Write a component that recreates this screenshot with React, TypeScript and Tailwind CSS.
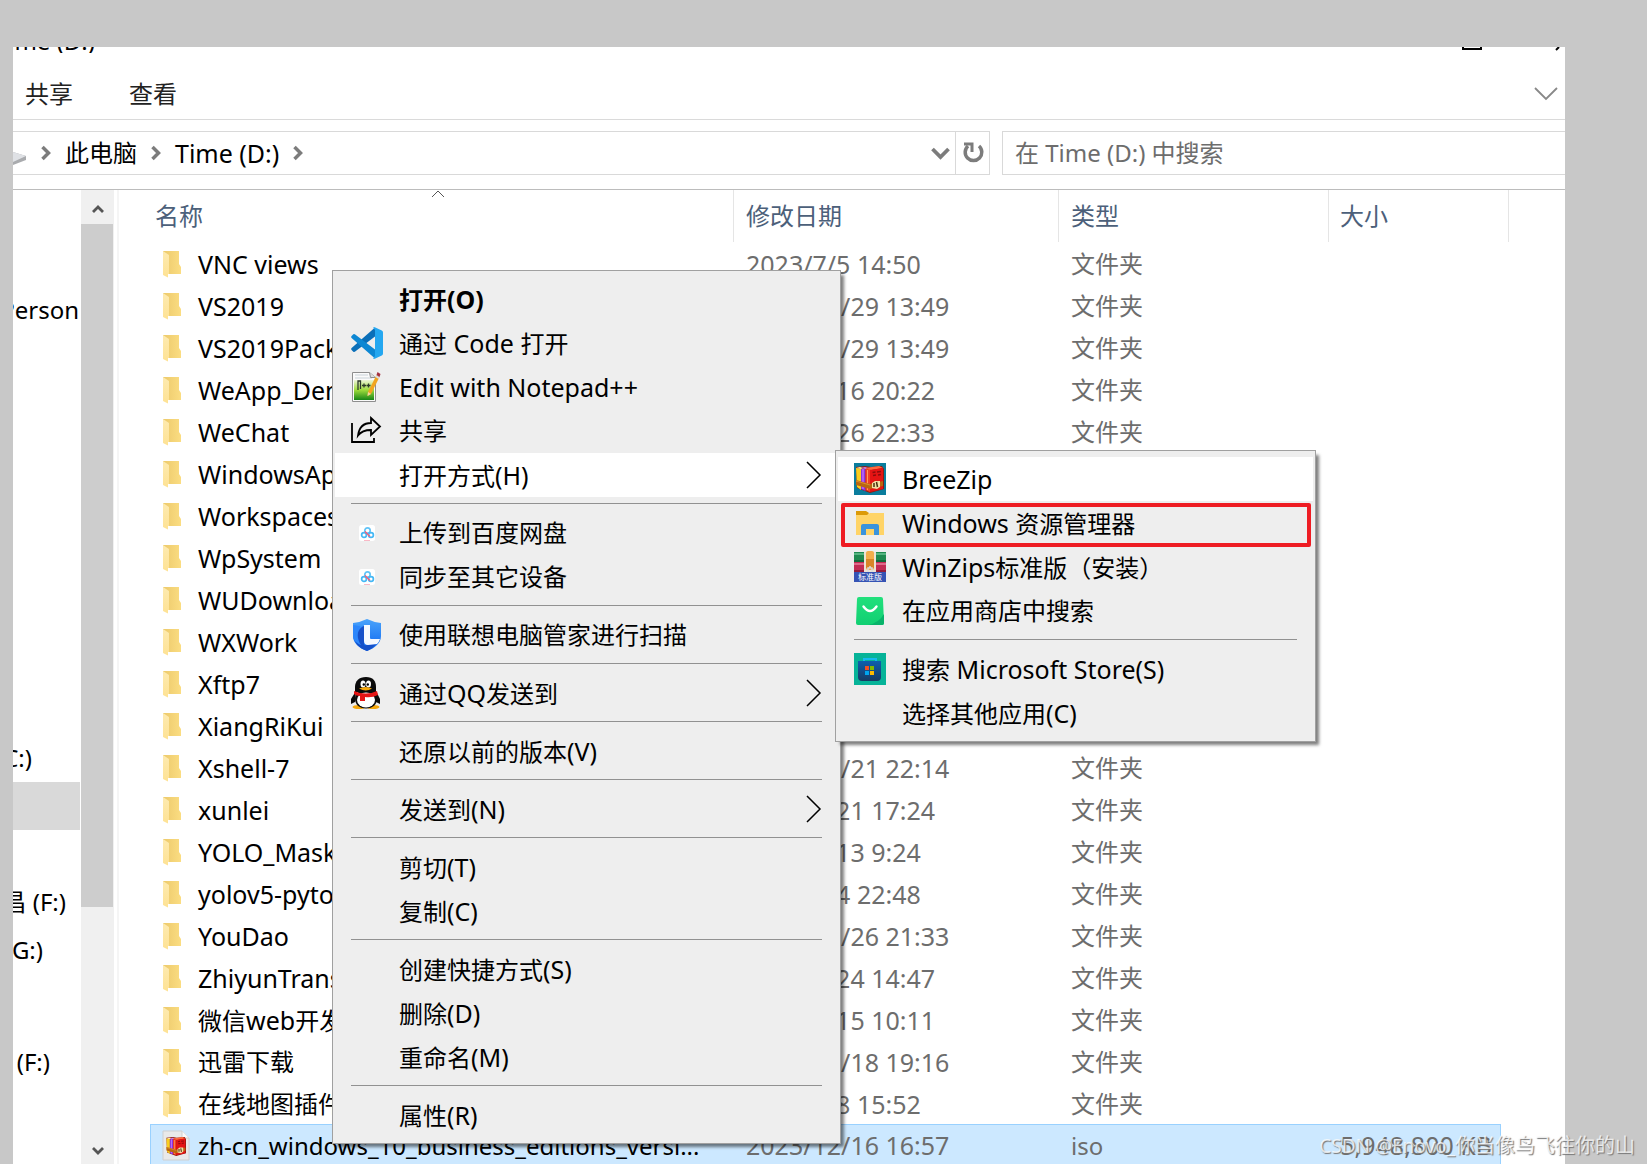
import React from "react";

type FileRow = { name: string; date: string };

const folders: FileRow[] = [
  { name: "VNC views", date: "2023/7/5 14:50" },
  { name: "VS2019", date: "2023/11/29 13:49" },
  { name: "VS2019Package", date: "2023/11/29 13:49" },
  { name: "WeApp_Demo", date: "2023/8/16 20:22" },
  { name: "WeChat", date: "2023/9/26 22:33" },
  { name: "WindowsApps", date: "2023/9/16 10:20" },
  { name: "Workspaces", date: "2023/8/12 15:30" },
  { name: "WpSystem", date: "2023/9/16 10:20" },
  { name: "WUDownloadCache", date: "2023/9/16 10:20" },
  { name: "WXWork", date: "2023/7/10 9:12" },
  { name: "Xftp7", date: "2023/10/21 22:14" },
  { name: "XiangRiKui", date: "2023/7/18 16:40" },
  { name: "Xshell-7", date: "2023/10/21 22:14" },
  { name: "xunlei", date: "2023/7/21 17:24" },
  { name: "YOLO_Mask", date: "2023/8/13 9:24" },
  { name: "yolov5-pytorch", date: "2023/8/4 22:48" },
  { name: "YouDao", date: "2023/10/26 21:33" },
  { name: "ZhiyunTranslator", date: "2023/7/24 14:47" },
  { name: "微信web开发者工具", date: "2023/8/15 10:11" },
  { name: "迅雷下载", date: "2023/11/18 19:16" },
  { name: "在线地图插件", date: "2023/8/8 15:52" },
];

/** Sets Latin runs one pixel larger than the Chinese characters around them. */
function Mixed({ text }: { text: string }) {
  return (
    <span className="whitespace-pre">
      {text.split(/([ -~]+)/).map((run, i) =>
        i % 2 ? (
          <span key={i} className="text-[25px]">
            {run}
          </span>
        ) : (
          run
        ),
      )}
    </span>
  );
}

function FolderIcon() {
  return (
    <svg width="20" height="28" viewBox="0 0 20 28" className="shrink-0" aria-hidden="true">
      <defs>
        <linearGradient id="folderBack" x1="0" x2="1">
          <stop offset="0" stopColor="#ecc96b" />
          <stop offset="1" stopColor="#fbdd82" />
        </linearGradient>
        <linearGradient id="folderFront" x1="0" x2="0" y1="0" y2="1">
          <stop offset="0" stopColor="#fdeab0" />
          <stop offset="1" stopColor="#fee294" />
        </linearGradient>
      </defs>
      <path d="M1 1h16v13l2 3v7H1z" fill="url(#folderBack)" />
      <path d="M1 1l6 4v19h-1v3.500L1 25z" fill="url(#folderFront)" />
    </svg>
  );
}

function Books() {
  return (
    <>
      <path d="M2 4l9-1 6 1 11-1 2 3v20l-14 4L3 25z" fill="#8e1a12" />
      <path d="M2 5l5 1v21l-4-3z" fill="#f9cf1e" />
      <path d="M2 5l4-1 3 1-2 1z" fill="#fff0a0" />
      <path d="M7 6h4.500v22L7 26z" fill="#8a35e0" />
      <path d="M8.500 6h1v20h-1z" fill="#d48bff" />
      <path d="M7 5l4-1 3 1-2.500 1z" fill="#c986f2" />
      <path d="M11.500 6H16v23l-4.500-2z" fill="#ef3f24" />
      <path d="M13 7h1v20h-1z" fill="#ff9a5a" />
      <path d="M11 5l14-2 4 2-12 2z" fill="#ff6a3e" />
      <path d="M16 7l13-2v21l-13 3z" fill="#e51414" />
      <path d="M18.500 9.500l3-.5M23 9l4-.5M19 12.500l3-.5M24 12l3-.5" stroke="#8e0c0c" strokeWidth="1.500" />
      <path d="M2 17l14 4 13-3v5l-13 3-14-4z" fill="#b9660f" />
      <path d="M2 18l14 4" stroke="#dd8e2c" />
      <path d="M18 20l3-2h5v6l-3 2-5-1z" fill="#f3dfa6" />
      <path d="M20 24v-4M22.500 19l1 5" stroke="#4a300f" strokeWidth="1.500" fill="none" />
    </>
  );
}

function BreeZipIcon() {
  return (
    <svg width="32" height="32" viewBox="0 0 32 32" aria-hidden="true">
      <rect width="32" height="32" fill="#0a7d9d" />
      <Books />
    </svg>
  );
}

function IsoIcon() {
  return (
    <svg width="28" height="32" viewBox="0 0 28 32" className="shrink-0" aria-hidden="true">
      <path d="M1 1h19l7 7v22H1z" fill="#e9e9e9" stroke="#cfcfcf" />
      <path d="M20 1v7h7" fill="#fafafa" stroke="#cfcfcf" />
      <g transform="translate(3 5) scale(0.7)">
        <Books />
      </g>
    </svg>
  );
}

function CodeIcon() {
  return (
    <svg width="32" height="32" viewBox="0 0 32 32" aria-hidden="true">
      <path d="M24 .5L.6 21.100q-.9 1 0 2L2.300 24.700q1 .6 1.900-.1L24 9.500z" fill="#0a6fb8" />
      <path d="M.6 10.900q-.9-1 0-2L2.300 7.300q1-.6 1.900.1L24 22.500v9z" fill="#0d87d3" />
      <path d="M23.800 31.700q-.9.400-1.800-.2L24 29V3l-2-2.500q.9-.6 1.800-.2l7 3.200q1.200.6 1.200 1.900v21.200q0 1.300-1.200 1.900z" fill="#24a7f0" />
    </svg>
  );
}

function NotepadIcon() {
  return (
    <svg width="32" height="32" viewBox="0 0 32 32" aria-hidden="true">
      <defs>
        <linearGradient id="noteGreen" x1="0" x2="0" y1="0" y2="1">
          <stop offset="0" stopColor="#eef5d8" />
          <stop offset="0.500" stopColor="#9fdc3c" />
          <stop offset="1" stopColor="#178516" />
        </linearGradient>
      </defs>
      <path d="M1.500 1.500h17l6 5v24h-23z" fill="#fafafa" stroke="#8e8e8e" />
      <path d="M4 4h13M4 7h17" stroke="#c9d2d8" />
      <rect x="3" y="9" width="20" height="20" fill="url(#noteGreen)" />
      <path d="M18.500 1.500l1 5h5" fill="#dcdcdc" stroke="#8e8e8e" />
      <path d="M7 19v-9h2.500v8M11 14.500h4M13 12.500v4M15.500 14.500h4M17.500 12.500v4" stroke="#2d3a2a" strokeWidth="1.300" fill="none" />
      <path d="M25.500 4l3 2-8.500 17-3.500 2 .5-4z" fill="#f2a51f" />
      <path d="M25.500 4l3 2-1 2-3-2z" fill="#d8dce0" />
      <path d="M26.500 1l3 2-1 3-3-2z" fill="#a4303f" />
      <path d="M17 21l3 2-3.500 2z" fill="#efd8a0" />
    </svg>
  );
}

function ShareIcon() {
  return (
    <svg width="32" height="32" viewBox="0 0 32 32" fill="none" stroke="#000" strokeWidth="1.800" aria-hidden="true">
      <path d="M1 8v19h22v-4" />
      <path d="M20 3l9 8.500-9 8.500v-5c-6 0-10 1.500-13 5.500C8 13 12 8 20 8z" />
    </svg>
  );
}

function CloudIcon() {
  return (
    <svg width="16" height="16" viewBox="0 0 16 16" fill="none" aria-hidden="true">
      <rect width="16" height="16" rx="2.500" fill="#fff" />
      <circle cx="8.500" cy="5.500" r="2.700" stroke="#63c4f7" strokeWidth="1.700" />
      <circle cx="5" cy="10" r="2.400" stroke="#45b8f5" strokeWidth="1.700" />
      <circle cx="12" cy="10" r="2.400" stroke="#45b8f5" strokeWidth="1.700" />
      <path d="M6 6.500l5 5" stroke="#f2607d" strokeWidth="1.500" />
      <path d="M5 15.500h6" stroke="#f9b9c6" />
    </svg>
  );
}

function ShieldIcon() {
  return (
    <svg width="32" height="32" viewBox="0 0 32 32" aria-hidden="true">
      <defs>
        <linearGradient id="shieldBlue" x1="0" x2="0" y1="0" y2="1">
          <stop offset="0" stopColor="#4aa3fb" />
          <stop offset="1" stopColor="#0b66f0" />
        </linearGradient>
      </defs>
      <path d="M16 0q6 3 14 4v13c0 7-6 12-14 15C8 29 2 24 2 17V4q8-1 14-4z" fill="url(#shieldBlue)" />
      <path d="M13 7v19q1 .5 3 0l9-1c-2 3-5 5-9 7C8 29 4 25 3 18q0-8 10-11z" fill="#1550c9" />
      <path d="M2 17V6q7 1 9 2c-6 4-5 12-1 18-5-2-8-5-8-9z" fill="#2c86fb" />
      <path d="M13 6h6v13q0 1 1 1h9q-1 3-3 5l-9 1q-4 0-4-4z" fill="#f4f8ff" />
    </svg>
  );
}

function QqIcon() {
  return (
    <svg width="32" height="32" viewBox="0 0 32 32" aria-hidden="true">
      <ellipse cx="8" cy="30" rx="6.500" ry="2" fill="#f5a70b" />
      <ellipse cx="22" cy="30" rx="6.500" ry="2" fill="#f5a70b" />
      <path d="M5 14L0 22v5l4-2zM25 14l4 8v5l-4-2z" fill="#0a0a0a" />
      <path d="M15 13c8 0 11 4 11 9s-4 9.500-11 9.500S4 27 4 22s3-9 11-9z" fill="#0a0a0a" />
      <ellipse cx="15" cy="23" rx="9" ry="7.500" fill="#fff" />
      <path d="M15 0c7 0 10 4 10 10v5H4v-5C4 4 8 0 15 0z" fill="#0a0a0a" />
      <ellipse cx="12" cy="7" rx="2.500" ry="3.500" fill="#fff" />
      <ellipse cx="17.500" cy="7" rx="2.500" ry="3.500" fill="#fff" />
      <circle cx="12.800" cy="7.500" r="1.200" fill="#000" />
      <circle cx="16.800" cy="7.500" r="1.200" fill="#000" />
      <path d="M8 11.500q7-3 13 0-6 4-13 0z" fill="#f5a70b" />
      <path d="M3 14q12 5 23 0l1 4q-6 3-13 2v4H9v-5q-4 0-6-2z" fill="#e51515" />
    </svg>
  );
}

function ExplorerIcon() {
  return (
    <svg width="32" height="32" viewBox="0 0 32 32" aria-hidden="true">
      <path d="M2 4h10l3 2-2 3H2z" fill="#dc9a08" />
      <path d="M2 8h11l3-2h14v22H2z" fill="#ffd467" />
      <path d="M7 28v-9q0-2 2-2h14q2 0 2 2v9h-5v-6h-8v6z" fill="#3a94dd" />
    </svg>
  );
}

function WinZipsIcon() {
  return (
    <svg width="32" height="32" viewBox="0 0 32 32" aria-hidden="true">
      <rect y="1" width="32" height="10" fill="#1f8a50" />
      <rect y="2" width="32" height="2" fill="#55b480" />
      <rect y="9" width="32" height="2" fill="#12683a" />
      <rect y="11" width="32" height="10" fill="#c22c54" />
      <rect y="12" width="32" height="2" fill="#e0698a" />
      <rect y="19" width="32" height="2" fill="#931c3c" />
      <rect x="10" y="1" width="12" height="20" fill="#eee3d5" />
      <rect x="12" y="0" width="8" height="19" rx="2" fill="#f3ae4d" />
      <path d="M12 8h8v9q-4 2-8 0z" fill="#d98627" />
      <path d="M14 21v-4h4v4M16 17v-2" fill="none" stroke="#ddd" strokeWidth="1.500" />
      <rect y="21" width="32" height="10" fill="#3553b4" />
      <text x="16" y="29" textAnchor="middle" fontSize="8" fill="#fff" fontFamily="Noto Sans CJK SC, sans-serif">
        标准版
      </text>
    </svg>
  );
}

function AppStoreIcon() {
  return (
    <svg width="32" height="32" viewBox="0 0 32 32" aria-hidden="true">
      <defs>
        <linearGradient id="bagGreen" x1="0" x2="0" y1="0" y2="1">
          <stop offset="0" stopColor="#22e07c" />
          <stop offset="1" stopColor="#10cf72" />
        </linearGradient>
      </defs>
      <path d="M5 2h22q2 0 2 2l1 24q0 2-2 2H4q-2 0-2-2L3 4q0-2 2-2z" fill="url(#bagGreen)" />
      <path d="M30 19v9q0 2-2 2H14q11-2 16-11z" fill="#08b36a" />
      <path d="M9.500 11.500q6.500 9 13 0" stroke="#fff" strokeWidth="2.400" fill="none" strokeLinecap="round" />
    </svg>
  );
}

function MsStoreIcon() {
  return (
    <svg width="32" height="32" viewBox="0 0 32 32" aria-hidden="true">
      <defs>
        <linearGradient id="storeBlue" x1="0" x2="0" y1="0" y2="1">
          <stop offset="0" stopColor="#0d5fae" />
          <stop offset="1" stopColor="#173a63" />
        </linearGradient>
      </defs>
      <rect width="32" height="32" fill="#06b398" />
      <path d="M10 9V6h12v3" stroke="#15b9ee" strokeWidth="2" fill="none" />
      <path d="M4 8h23v16q0 4-4 4H8q-4 0-4-4z" fill="url(#storeBlue)" />
      <rect x="11" y="13" width="4" height="4" fill="#f25022" />
      <rect x="16" y="13" width="4" height="4" fill="#7fba00" />
      <rect x="11" y="18" width="4" height="4" fill="#00a4ef" />
      <rect x="16" y="18" width="4" height="4" fill="#ffb900" />
    </svg>
  );
}

type Entry = "separator" | { label: string; icon?: React.ReactNode; bold?: boolean; active?: boolean; arrow?: boolean; marked?: boolean };

const mainEntries: Entry[] = [
  { label: "打开(O)", bold: true },
  { label: "通过 Code 打开", icon: <CodeIcon /> },
  { label: "Edit with Notepad++", icon: <NotepadIcon /> },
  { label: "共享", icon: <ShareIcon /> },
  { label: "打开方式(H)", active: true, arrow: true },
  "separator",
  { label: "上传到百度网盘", icon: <CloudIcon /> },
  { label: "同步至其它设备", icon: <CloudIcon /> },
  "separator",
  { label: "使用联想电脑管家进行扫描", icon: <ShieldIcon /> },
  "separator",
  { label: "通过QQ发送到", icon: <QqIcon />, arrow: true },
  "separator",
  { label: "还原以前的版本(V)" },
  "separator",
  { label: "发送到(N)", arrow: true },
  "separator",
  { label: "剪切(T)" },
  { label: "复制(C)" },
  "separator",
  { label: "创建快捷方式(S)" },
  { label: "删除(D)" },
  { label: "重命名(M)" },
  "separator",
  { label: "属性(R)" },
];

const openWithEntries: Entry[] = [
  { label: "BreeZip", icon: <BreeZipIcon />, active: true },
  { label: "Windows 资源管理器", icon: <ExplorerIcon />, marked: true },
  { label: "WinZips标准版（安装）", icon: <WinZipsIcon /> },
  { label: "在应用商店中搜索", icon: <AppStoreIcon /> },
  "separator",
  { label: "搜索 Microsoft Store(S)", icon: <MsStoreIcon /> },
  { label: "选择其他应用(C)" },
];

function Menu({ entries, label, className }: { entries: Entry[]; label: string; className: string }) {
  return (
    <div
      role="menu"
      aria-label={label}
      className={`absolute border border-[#a0a0a0] bg-[#eeeeee] px-[2px] py-1.5 shadow-[4px_4px_3px_-1px_rgba(0,0,0,0.5)] ${className}`}
    >
      {entries.map((e, i) =>
        e === "separator" ? (
          <div key={i} role="separator" className="mx-4 mt-1.5 mb-[7px] h-px bg-[#919191]" />
        ) : (
          <button
            key={i}
            role="menuitem"
            className={`relative flex h-11 w-full items-center gap-4 pr-4 pl-4 text-left whitespace-nowrap ${e.active ? "bg-white" : ""} ${e.bold ? "font-bold" : ""}`}
          >
            <span className="flex w-8 shrink-0 items-center justify-center">{e.icon}</span>
            <span className="flex-1">
              <Mixed text={e.label} />
            </span>
            {e.arrow && (
              <svg width="16" height="28" viewBox="0 0 16 28" fill="none" stroke="#000" strokeWidth="1.500" aria-hidden="true">
                <path d="M1 1l13 13L1 27" />
              </svg>
            )}
            {e.marked && <span className="absolute top-0.5 right-0.5 left-[3px] h-11 rounded-[2px] border-4 border-[#ee1c23]" />}
          </button>
        ),
      )}
    </div>
  );
}

function Crumb() {
  return (
    <svg width="10" height="16" viewBox="0 0 10 16" fill="none" stroke="#7c7c7c" strokeWidth="3.500" aria-hidden="true">
      <path d="M1.500 2l6 6-6 6" />
    </svg>
  );
}

function AddressBar() {
  return (
    <div className="flex h-11 gap-3">
      <div className="flex w-[977px] border-y border-r border-[#d9d9d9]">
        <svg width="13" height="42" viewBox="0 0 13 42" aria-hidden="true">
          <path d="M0 20l13 4v4L0 33z" fill="#a9abae" />
          <path d="M0 20l13 4-13 6z" fill="#dfe1e5" />
        </svg>
        <nav aria-label="地址" className="flex flex-1 items-center gap-3.5 pl-[15px]">
          <Crumb />
          <button>此电脑</button>
          <Crumb />
          <button>
            <Mixed text="Time (D:)" />
          </button>
          <Crumb />
        </nav>
        <button aria-label="历史记录" className="flex w-[30px] items-center justify-center">
          <svg width="19" height="13" viewBox="0 0 19 13" fill="none" stroke="#7c7c7c" strokeWidth="3.800" aria-hidden="true">
            <path d="M1.500 2l8 8 8-8" />
          </svg>
        </button>
        <button aria-label="刷新" className="flex w-[34px] items-center justify-center border-l border-[#d9d9d9]">
          <svg width="22" height="24" viewBox="0 0 22 24" fill="none" stroke="#7c7c7c" strokeWidth="3.500" aria-hidden="true">
            <path d="M17 5a8.300 8.300 0 1 1-11 0" />
            <path d="M2 3h8v8" strokeWidth="3" />
          </svg>
        </button>
      </div>
      <input
        aria-label="在 Time (D:) 中搜索"
        placeholder="在 Time (D:) 中搜索"
        className="min-w-0 flex-1 border-y border-l border-[#d9d9d9] pl-3 outline-none placeholder:text-[#6d6d6d]"
      />
    </div>
  );
}

function Sidebar() {
  return (
    <div className="flex shrink-0">
      <aside className="w-[68px] overflow-hidden whitespace-nowrap">
        <div className="mt-24 flex h-12 w-[66px] items-center justify-end">Person</div>
        <div className="mt-[400px] flex h-12 w-[19px] items-center justify-end">(C:)</div>
        <div className="h-12 w-[67px] bg-[#d9d9d9]" />
        <div className="mt-12 flex h-12 w-[53px] items-center justify-end">昌 (F:)</div>
        <div className="flex h-12 w-[30px] items-center justify-end">(G:)</div>
        <div className="mt-16 flex h-12 w-[37px] items-center justify-end">(F:)</div>
      </aside>
      <div className="flex w-[33px] flex-col bg-[#f0f0f0]">
        <button aria-label="向上滚动" className="flex h-[34px] items-center justify-center pt-1">
          <svg width="12" height="10" viewBox="0 0 12 10" fill="none" stroke="#555" strokeWidth="2.800" aria-hidden="true">
            <path d="M1 8l5-5 5 5" />
          </svg>
        </button>
        <div className="w-8 flex-[683] bg-[#cdcdcd]" />
        <div className="flex-[230]" />
        <button aria-label="向下滚动" className="flex h-[27px] items-center justify-center">
          <svg width="12" height="10" viewBox="0 0 12 10" fill="none" stroke="#555" strokeWidth="2.800" aria-hidden="true">
            <path d="M1 2l5 5 5-5" />
          </svg>
        </button>
      </div>
      <div className="ml-[3px] w-0.5 bg-[#f5f5f5]" />
    </div>
  );
}

function FileTable() {
  const head = "border-r border-[#e5e5e5] p-0 pl-3 text-left font-normal";
  const cell = "p-0 pt-0.5 pl-3 text-[#6d6d6d]";
  const picked = "border-t border-[#99d1ff] bg-[#cce8ff]";
  return (
    <table className="w-[1359px] shrink-0 table-fixed border-separate border-spacing-0 self-start whitespace-nowrap">
      <colgroup>
        <col className="w-[584px]" />
        <col className="w-[325px]" />
        <col className="w-[270px]" />
        <col className="w-[172px]" />
        <col className="w-2" />
      </colgroup>
      <thead>
        <tr className="h-13 text-[#4c607a]">
          <th className="relative border-r border-[#e5e5e5] p-0 pl-[5px] text-left font-normal">
            名称
            <svg width="14" height="8" viewBox="0 0 14 8" fill="none" stroke="#555" className="absolute top-0 left-[281px]" aria-hidden="true">
              <path d="M1 7l6-6 6 6" />
            </svg>
          </th>
          <th className={head}>修改日期</th>
          <th className={head}>类型</th>
          <th className="p-0 pl-[11px] text-left font-normal">大小</th>
          <th className="border-r border-[#e5e5e5] p-0" />
        </tr>
      </thead>
      <tbody>
        {folders.map((f) => (
          <tr key={f.name} className="h-[42px]">
            <td className="p-0 pt-0.5">
              <div className="flex items-center gap-4 pl-3">
                <FolderIcon />
                <Mixed text={f.name} />
              </div>
            </td>
            <td className={cell}>
              <Mixed text={f.date} />
            </td>
            <td className={cell}>文件夹</td>
            <td />
            <td />
          </tr>
        ))}
        <tr className="h-[42px]">
          <td className={`border-l p-0 ${picked}`}>
            <div className="flex items-center gap-2 pl-[11px]">
              <IsoIcon />
              zh-cn_windows_10_business_editions_versi...
            </div>
          </td>
          <td className={`p-0 pl-3 text-[#6d6d6d] ${picked}`}>
            <Mixed text="2023/12/16 16:57" />
          </td>
          <td className={`p-0 pl-3 text-[#6d6d6d] ${picked}`}>iso</td>
          <td className={`border-r p-0 pr-2 text-right text-[#6d6d6d] ${picked}`}>
            <Mixed text="5,948,800 KB" />
          </td>
          <td />
        </tr>
      </tbody>
    </table>
  );
}

export default function App() {
  return (
    <div className="relative flex h-screen overflow-hidden bg-[#c8c8c8] pt-[47px] pr-[82px] pl-[13px] font-['Noto_Sans','Noto_Sans_CJK_SC',sans-serif] text-[24px] leading-8 text-black">
      <main className="flex min-w-0 flex-1 flex-col overflow-hidden bg-white">
        <div className="flex h-1.5 shrink-0 items-end justify-between overflow-hidden">
          <div className="flex w-[82px] justify-end leading-6 whitespace-nowrap">Time (D:)</div>
          <svg width="103" height="6" viewBox="0 0 103 6" aria-hidden="true" className="self-start">
            <path d="M1 0v2h18V0" stroke="#000" strokeWidth="2" fill="none" />
            <path d="M97 0l-3 3" stroke="#000" strokeWidth="2" />
          </svg>
        </div>
        <div className="flex h-[67px] shrink-0 items-center justify-between border-b border-[#dadada] pr-[7px] pl-3 text-[#222]">
          <div className="flex gap-14 pt-5 pb-1">
            <button>共享</button>
            <button>查看</button>
          </div>
          <button aria-label="展开功能区" className="pt-4">
            <svg width="24" height="14" viewBox="0 0 24 14" fill="none" stroke="#888" strokeWidth="1.800" aria-hidden="true">
              <path d="M1 1l11 11L23 1" />
            </svg>
          </button>
        </div>
        <div className="shrink-0 border-b border-[#bcbcbc] pt-[11px] pb-3.5">
          <AddressBar />
        </div>
        <div className="flex min-h-0 flex-1 gap-[31px] overflow-hidden">
          <Sidebar />
          <FileTable />
        </div>
      </main>
      <Menu entries={mainEntries} label="文件夹操作" className="top-[270px] left-[332px] w-[509px]" />
      <Menu entries={openWithEntries} label="打开方式" className="top-[450px] left-[835px] w-[481px]" />
      <div className="pointer-events-none absolute right-3 bottom-0.5 text-[20px] text-white/75 [text-shadow:1px_1px_1px_#777]">
        <span className="text-[19px]">CSDN @Enovo_</span>你当像鸟飞往你的山
      </div>
    </div>
  );
}
